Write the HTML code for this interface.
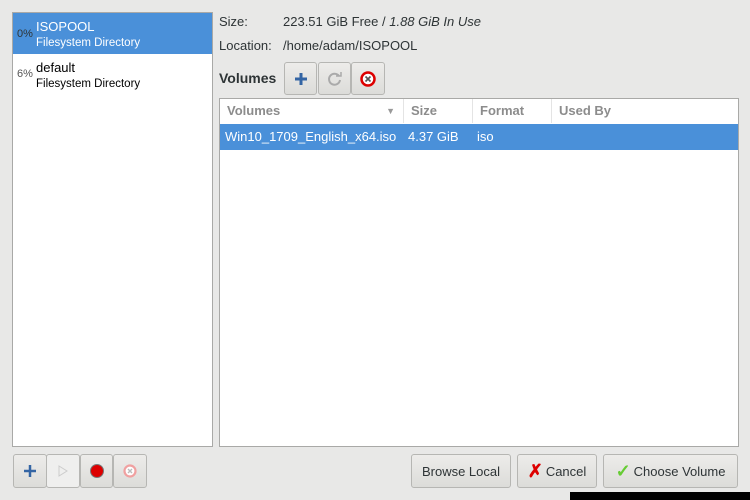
<!DOCTYPE html>
<html><head><style>
body{margin:0;width:750px;height:500px;background:#e8e8e7;font-family:"Liberation Sans",sans-serif;font-size:13px;color:#2e3436;position:relative;overflow:hidden}
.a{position:absolute}
.btn{position:absolute;border:1px solid #b6b6b3;border-radius:3px;background:linear-gradient(#edecea,#dcdcd9);box-sizing:border-box;display:flex;align-items:center;justify-content:center;font-size:13px;color:#2e3436}
.hd{position:absolute;top:0;height:24px;line-height:24px;color:#8c8c8c;font-weight:bold;padding-left:7px;box-sizing:border-box;border-right:1px solid #e4e4e4}
</style></head><body>
<div class="a" style="left:12px;top:12px;width:201px;height:435px;background:#fff;border:1px solid #a9a9a7;box-sizing:border-box">
 <div class="a" style="left:0;top:0;width:199px;height:41px;background:#4a90d9"></div>
 <div class="a" style="left:4px;top:15px;font-size:11px;color:#2e3436">0%</div>
 <div class="a" style="left:23px;top:6px;color:#fff">ISOPOOL</div>
 <div class="a" style="left:23px;top:24px;color:#fff;font-size:11.5px">Filesystem Directory</div>
 <div class="a" style="left:4px;top:55px;font-size:11px;color:#555">6%</div>
 <div class="a" style="left:23px;top:47px;color:#000">default</div>
 <div class="a" style="left:23px;top:65px;color:#000;font-size:11.5px">Filesystem Directory</div>
</div>
<div class="a" style="left:219px;top:14px">Size:</div>
<div class="a" style="left:283px;top:14px">223.51 GiB Free / <i>1.88 GiB In Use</i></div>
<div class="a" style="left:219px;top:38px">Location:</div>
<div class="a" style="left:283px;top:38px">/home/adam/ISOPOOL</div>
<div class="a" style="left:219px;top:70px;font-weight:bold;font-size:14px">Volumes</div>
<div class="btn" style="left:284px;top:62px;width:33px;height:33px"><svg width="14" height="14"><path d="M7 1V13M1 7H13" stroke="#3465a4" stroke-width="3"/></svg></div>
<div class="btn" style="left:318px;top:62px;width:33px;height:33px"><svg width="16" height="16"><path d="M12 5A5.5 5.5 0 1 0 13 9" fill="none" stroke="#aaa" stroke-width="2"/><path d="M9 5h5V1" fill="none" stroke="#aaa" stroke-width="1.5"/></svg></div>
<div class="btn" style="left:351px;top:62px;width:34px;height:33px"><svg width="16" height="16"><circle cx="8" cy="8" r="6.5" fill="#fff" stroke="#d00" stroke-width="2.5"/><path d="M5.5 5.5l5 5M10.5 5.5l-5 5" stroke="#555" stroke-width="1.6"/></svg></div>
<div class="a" style="left:219px;top:98px;width:520px;height:349px;background:#fff;border:1px solid #a9a9a7;box-sizing:border-box">
 <div class="hd" style="left:0;width:184px">Volumes<span style="position:absolute;right:8px;top:0;font-size:9px;color:#999">▼</span></div>
 <div class="hd" style="left:184px;width:69px">Size</div>
 <div class="hd" style="left:253px;width:79px">Format</div>
 <div class="hd" style="left:332px;width:186px;border:0">Used By</div>
 <div class="a" style="left:0;top:25px;width:518px;height:26px;background:#4a90d9;color:#fff;line-height:26px">
  <span class="a" style="left:5px">Win10_1709_English_x64.iso</span><span class="a" style="left:188px">4.37 GiB</span><span class="a" style="left:257px">iso</span></div>
</div>
<div class="btn" style="left:13px;top:454px;width:34px;height:34px"><svg width="12" height="12"><path d="M6 0V12M0 6H12" stroke="#3465a4" stroke-width="2.5"/></svg></div>
<div class="btn" style="left:46px;top:454px;width:34px;height:34px;background:#efefee"><svg width="10" height="12"><path d="M1 1L9 6L1 11Z" fill="none" stroke="#ccc"/></svg></div>
<div class="btn" style="left:80px;top:454px;width:33px;height:34px"><svg width="14" height="14"><circle cx="7" cy="7" r="6.5" fill="#d00" stroke="#777"/></svg></div>
<div class="btn" style="left:113px;top:454px;width:34px;height:34px"><svg width="14" height="14"><circle cx="7" cy="7" r="5.5" fill="#fff" stroke="#f0a0a0" stroke-width="2.2"/><path d="M5 5l4 4M9 5l-4 4" stroke="#bbb" stroke-width="1.4"/></svg></div>
<div class="btn" style="left:411px;top:454px;width:100px;height:34px">Browse Local</div>
<div class="btn" style="left:517px;top:454px;width:80px;height:34px"><span style="color:#d00;font-weight:bold;font-size:18px;margin-right:3px">✗</span>Cancel</div>
<div class="btn" style="left:603px;top:454px;width:135px;height:34px"><span style="color:#6c3;font-weight:bold;font-size:18px;margin-right:3px">✓</span>Choose Volume</div>
<div class="a" style="left:570px;top:492px;width:180px;height:8px;background:#000"></div>
</body></html>
